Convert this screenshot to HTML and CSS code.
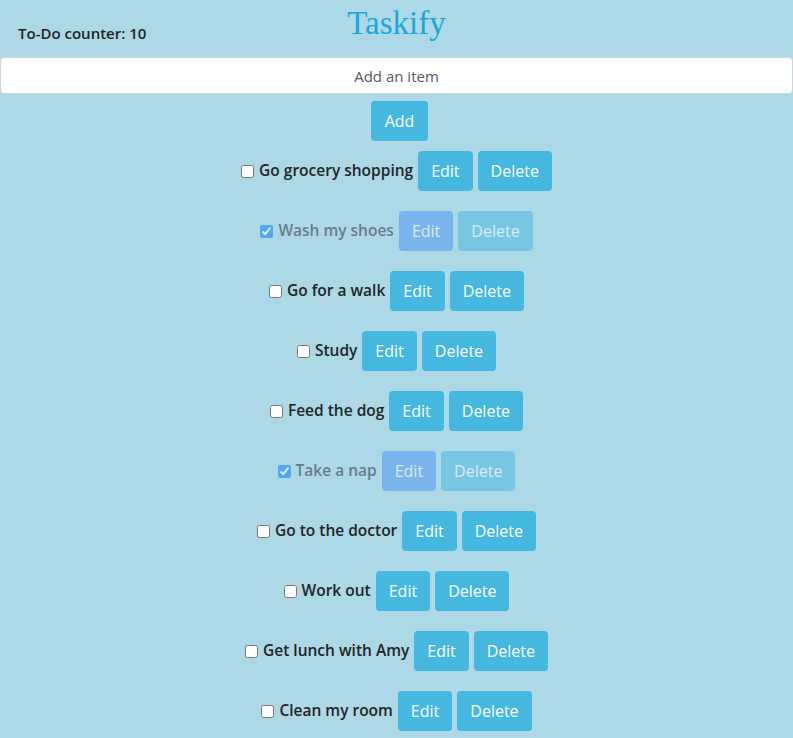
FILE: index.html
```html
<!DOCTYPE html>
<html>
<head>
<meta charset="utf-8">
<title>Taskify</title>
<link rel="stylesheet" href="styles.css">
</head>
<body>
<header class="header">
  <div class="counter">To-Do counter: 10</div>
  <h1 class="title">Taskify</h1>
  <div></div>
</header>
<input class="add-input" type="text" placeholder="Add an item">
<div class="add-row"><button class="btn btn-add">Add</button></div>
<ul class="list">
  <li class="item"><input type="checkbox" class="check"><span class="label">Go grocery shopping</span><button class="btn">Edit</button><button class="btn">Delete</button></li>
  <li class="item done"><input type="checkbox" class="check" checked><span class="label">Wash my shoes</span><button class="btn btn-edit">Edit</button><button class="btn">Delete</button></li>
  <li class="item"><input type="checkbox" class="check"><span class="label">Go for a walk</span><button class="btn">Edit</button><button class="btn">Delete</button></li>
  <li class="item"><input type="checkbox" class="check"><span class="label">Study</span><button class="btn">Edit</button><button class="btn">Delete</button></li>
  <li class="item"><input type="checkbox" class="check"><span class="label">Feed the dog</span><button class="btn">Edit</button><button class="btn">Delete</button></li>
  <li class="item done"><input type="checkbox" class="check" checked><span class="label">Take a nap</span><button class="btn btn-edit">Edit</button><button class="btn">Delete</button></li>
  <li class="item"><input type="checkbox" class="check"><span class="label">Go to the doctor</span><button class="btn">Edit</button><button class="btn">Delete</button></li>
  <li class="item"><input type="checkbox" class="check"><span class="label">Work out</span><button class="btn">Edit</button><button class="btn">Delete</button></li>
  <li class="item"><input type="checkbox" class="check"><span class="label">Get lunch with Amy</span><button class="btn">Edit</button><button class="btn">Delete</button></li>
  <li class="item"><input type="checkbox" class="check"><span class="label">Clean my room</span><button class="btn">Edit</button><button class="btn">Delete</button></li>
</ul>
</body>
</html>
```
FILE: styles.css
```css
* { box-sizing: border-box; }
html, body { margin: 0; padding: 0; }
body {
  background: #add8e6;
  font-family: "Open Sans", "Noto Sans", sans-serif;
  color: #212529;
}
.header {
  display: grid;
  grid-template-columns: 1fr auto 1fr;
  align-items: start;
  height: 57px;
}
.counter {
  padding: 23px 0 0 18px;
  font-size: 15px;
  font-weight: 600;
}
.title {
  margin: 5px 0 0;
  font-family: "Liberation Serif", "Times New Roman", serif;
  font-weight: normal;
  font-size: 33px;
  color: #1ba7dd;
}
.add-input {
  display: block;
  width: 100%;
  height: 37px;
  margin: 0;
  border: 1px solid #ced4da;
  border-radius: 4px;
  background: #fff;
  text-align: center;
  font-family: inherit;
  font-size: 15px;
  color: #495057;
}
.add-input::placeholder { color: #555a5f; }
.add-row {
  display: flex;
  justify-content: center;
  padding-top: 7px;
  padding-left: 6px;
}
.btn {
  height: 40px;
  padding: 0 13px;
  border: none;
  border-radius: 4px;
  background: #45b8df;
  color: #fff;
  font-family: inherit;
  font-size: 16px;
}
.btn-add { padding: 0 14px; }
.list {
  list-style: none;
  margin: 0;
  padding: 0;
}
.item {
  display: flex;
  justify-content: center;
  align-items: center;
  gap: 5px;
  height: 60px;
}
.check {
  width: 13px;
  height: 13px;
  margin: 0;
}
.label {
  font-size: 15.5px;
  font-weight: 600;
  margin-bottom: 3px;
}
.done { opacity: 0.5; }
.btn-edit { background: #4b92f2; }
```
